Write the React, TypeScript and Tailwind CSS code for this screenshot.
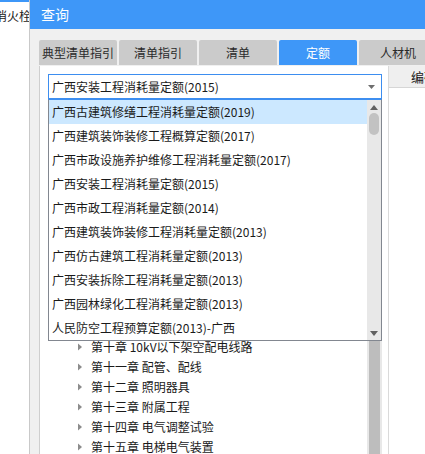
import React from 'react';

const tabs = ['典型清单指引', '清单指引', '清单', '定额', '人材机'];

const options = [
    '广西古建筑修缮工程消耗量定额(2019)',
    '广西建筑装饰装修工程概算定额(2017)',
    '广西市政设施养护维修工程消耗量定额(2017)',
    '广西安装工程消耗量定额(2015)',
    '广西市政工程消耗量定额(2014)',
    '广西建筑装饰装修工程消耗量定额(2013)',
    '广西仿古建筑工程消耗量定额(2013)',
    '广西安装拆除工程消耗量定额(2013)',
    '广西园林绿化工程消耗量定额(2013)',
    '人民防空工程预算定额(2013)-广西',
];

// only the chapters that show below the open dropdown
const chapters = [
    '第十章 10kV以下架空配电线路',
    '第十一章 配管、配线',
    '第十二章 照明器具',
    '第十三章 附属工程',
    '第十四章 电气调整试验',
    '第十五章 电梯电气装置',
];

export default function App() {
    return (
        <div
            className="relative w-[425px] h-[454px] overflow-hidden bg-white flex text-[12px] text-[#1a1a1a]"
            style={{ fontFamily: '"Noto Sans CJK SC", "Microsoft YaHei", sans-serif' }}
        >
            {/* strip of the window behind */}
            <div className="w-[30px] shrink-0 border-r border-[#c9c9c9] flex flex-col overflow-hidden">
                <div className="h-[2px] bg-[#3d97f8]" />
                <div className="ml-[-5px] mt-[6px] whitespace-nowrap text-[12px] leading-[16px] text-[#1a1a1a]">消火栓</div>
            </div>

            {/* dialog */}
            <div className="flex-1 min-w-0 flex flex-col bg-[#f0f0f0]">
                <div className="h-[29px] bg-[#3e97f8] flex items-center pl-[11px] text-white text-[14px] shrink-0">查询</div>

                <div className="flex-1 flex flex-col pt-[11px] pl-[9px]">
                    {/* tabs */}
                    <div className="flex gap-[2px] h-[25px] shrink-0">
                        {tabs.map((t) => (
                            <div
                                key={t}
                                className={`w-[78px] shrink-0 flex items-center justify-center rounded-t-[2px] text-[12px] ${t === '定额' ? 'bg-[#3e97f8] text-white' : 'bg-[#cbcbcb] text-[#2a2a2a]'}`}
                            >
                                {t}
                            </div>
                        ))}
                    </div>

                    {/* content */}
                    <div className="flex-1 flex bg-white border-l border-[#cfcfcf] mt-[1px]">
                        <div className="w-[348px] shrink-0 flex flex-col pl-[8px] pt-[8px] pr-[6px]">
                            <div className="h-[25px] border border-[#3d8ef0] flex items-center justify-between pl-[3px] pr-[6px]">
                                <span className="whitespace-nowrap leading-[16px]">广西安装工程消耗量定额(2015)</span>
                                <svg width="7" height="4" viewBox="0 0 7 4">
                                    <path d="M0 0 L7 0 L3.5 4 Z" fill="#6e6e6e" />
                                </svg>
                            </div>
                            <div className="flex-1 flex">
                                <div className="flex-1 min-w-0 pt-[238px]">
                                    {chapters.map((c) => (
                                        <div key={c} className="h-[20px] flex items-center gap-[7px] pl-[28px] whitespace-nowrap">
                                            <svg width="8" height="8" viewBox="0 0 8 8" className="shrink-0">
                                                <path d="M2 0.5 L6 4 L2 7.5 Z" fill="#8c8c8c" />
                                            </svg>
                                            <span className="leading-[16px]">{c}</span>
                                        </div>
                                    ))}
                                </div>
                                <div className="w-[15px] shrink-0 bg-[#e8e8e8] flex justify-center pt-[40px]">
                                    <div className="w-[11px] h-[400px] bg-[#bdbdbd]" />
                                </div>
                            </div>
                        </div>
                        <div className="flex-1 border-l border-[#dadada]">
                            <div className="h-[22px] bg-[#efefef] border-b border-[#d6d6d6] flex items-center pl-[22px] whitespace-nowrap text-[13px]">编码</div>
                        </div>
                    </div>
                </div>
            </div>

            {/* open dropdown list */}
            <div className="absolute left-[48px] top-[99px] w-[334px] h-[242px] bg-white border border-[#828790] border-t-[#3d8ef0] flex">
                <div className="flex-1 min-w-0">
                    {options.map((o, i) => (
                        <div
                            key={o}
                            className={`h-[24px] flex items-center pl-[3px] whitespace-nowrap ${i === 0 ? 'bg-[#cce8ff]' : ''}`}
                        >
                            <span className="leading-[16px]">{o}</span>
                        </div>
                    ))}
                </div>
                <div className="w-[14px] shrink-0 bg-[#e8e8e8] flex flex-col items-center justify-between pt-[5px] pb-[4px]">
                    <div className="flex flex-col items-center gap-[3px]">
                        <svg width="8" height="5" viewBox="0 0 8 5">
                            <path d="M0 5 L8 5 L4 0 Z" fill="#606060" />
                        </svg>
                        <div className="w-[10px] h-[22px] rounded-[5px] bg-[#c2c2c2]" />
                    </div>
                    <svg width="8" height="5" viewBox="0 0 8 5">
                        <path d="M0 0 L8 0 L4 5 Z" fill="#606060" />
                    </svg>
                </div>
            </div>
        </div>
    );
}
